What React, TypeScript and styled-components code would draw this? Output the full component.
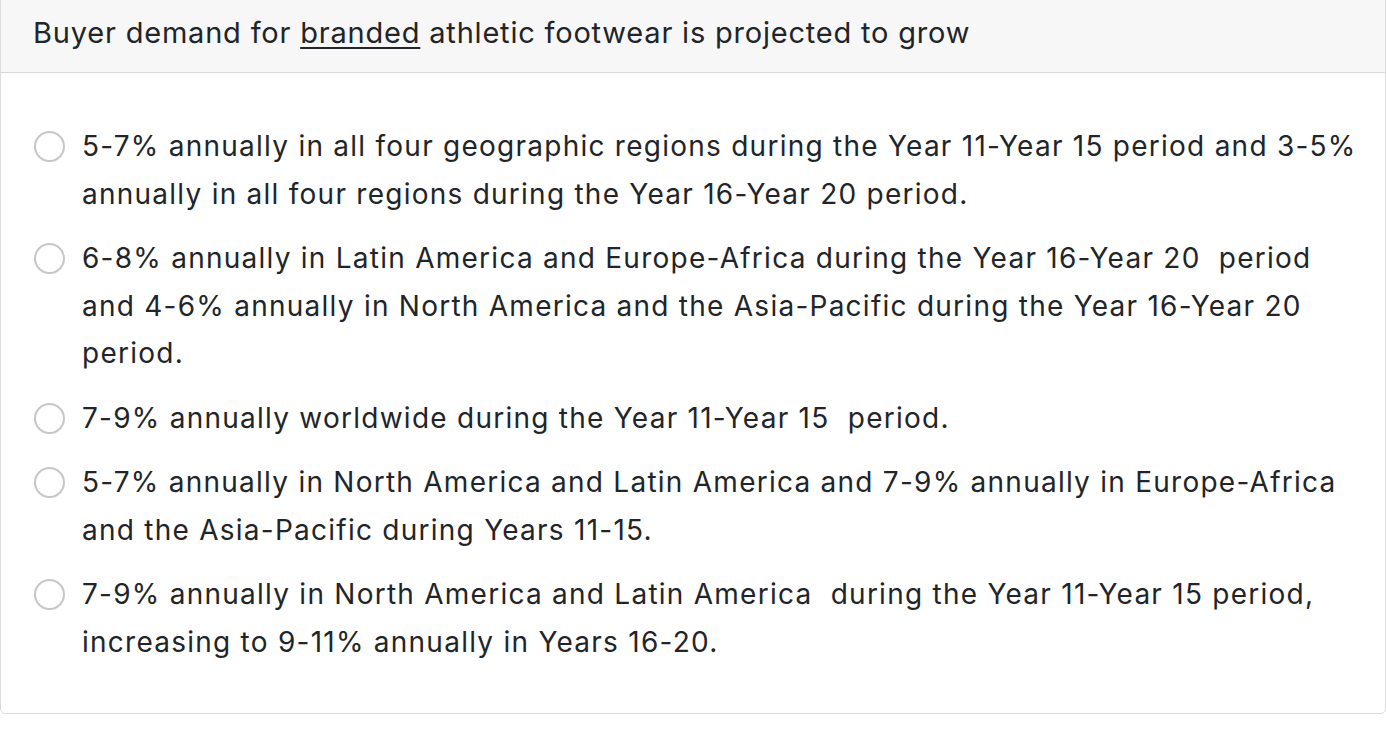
import React from "react";
import styled, { createGlobalStyle } from "styled-components";

const Global = createGlobalStyle`
  html, body { margin: 0; padding: 0; background: #ffffff; }
  body {
    font-family: Inter, "Liberation Sans", Arial, sans-serif;
    color: #212529;
    -webkit-font-smoothing: antialiased;
  }
`;

const Card = styled.div`
  box-sizing: border-box;
  width: 1386px;
  margin-top: -1px;
  border: 1px solid #dcdcdc;
  border-radius: 0 0 5px 5px;
  background: #ffffff;
`;

const Header = styled.div`
  box-sizing: border-box;
  height: 73px;
  padding: 0 32px 7px;
  display: flex;
  align-items: center;
  background: #f7f7f7;
  border-bottom: 1px solid #d9d9d9;
  font-size: 29px;
  line-height: 1;
  letter-spacing: 0.8px;
`;

const Under = styled.span`
  text-decoration: underline;
  text-underline-offset: 4px;
  text-decoration-thickness: 2px;
`;

const Body = styled.div`
  padding: 50px 26px 47px 33px;
  display: flex;
  flex-direction: column;
  gap: 17px;
`;

const Option = styled.label`
  display: flex;
  align-items: flex-start;
  gap: 17px;
  font-size: 28px;
  line-height: 47.5px;
  letter-spacing: 1.25px;
  cursor: pointer;
`;

const Radio = styled.span`
  flex: none;
  box-sizing: border-box;
  width: 31px;
  height: 31px;
  margin-top: 8px;
  border: 2px solid #c6c6c6;
  border-radius: 50%;
  background: #ffffff;
`;

const Text = styled.span`
  flex: 1;
`;

const options = [
  "5-7% annually in all four geographic regions during the Year 11-Year 15 period and 3-5% annually in all four regions during the Year 16-Year 20 period.",
  "6-8% annually in Latin America and Europe-Africa during the Year 16-Year 20\u00a0 period and 4-6% annually in North America and the Asia-Pacific during the Year 16-Year 20 period.",
  "7-9% annually worldwide during the Year 11-Year 15\u00a0 period.",
  "5-7% annually in North America and Latin America and 7-9% annually in Europe-Africa and the Asia-Pacific during Years 11-15.",
  "7-9% annually in North America and Latin America\u00a0 during the Year 11-Year 15 period, increasing to 9-11% annually in Years 16-20.",
];

export default function App() {
  return (
    <>
      <Global />
      <Card>
        <Header>
          <span>
            Buyer demand for <Under>branded</Under> athletic footwear is projected to grow
          </span>
        </Header>
        <Body>
          {options.map((o, i) => (
            <Option key={i}>
              <Radio />
              <Text>{o}</Text>
            </Option>
          ))}
        </Body>
      </Card>
    </>
  );
}
